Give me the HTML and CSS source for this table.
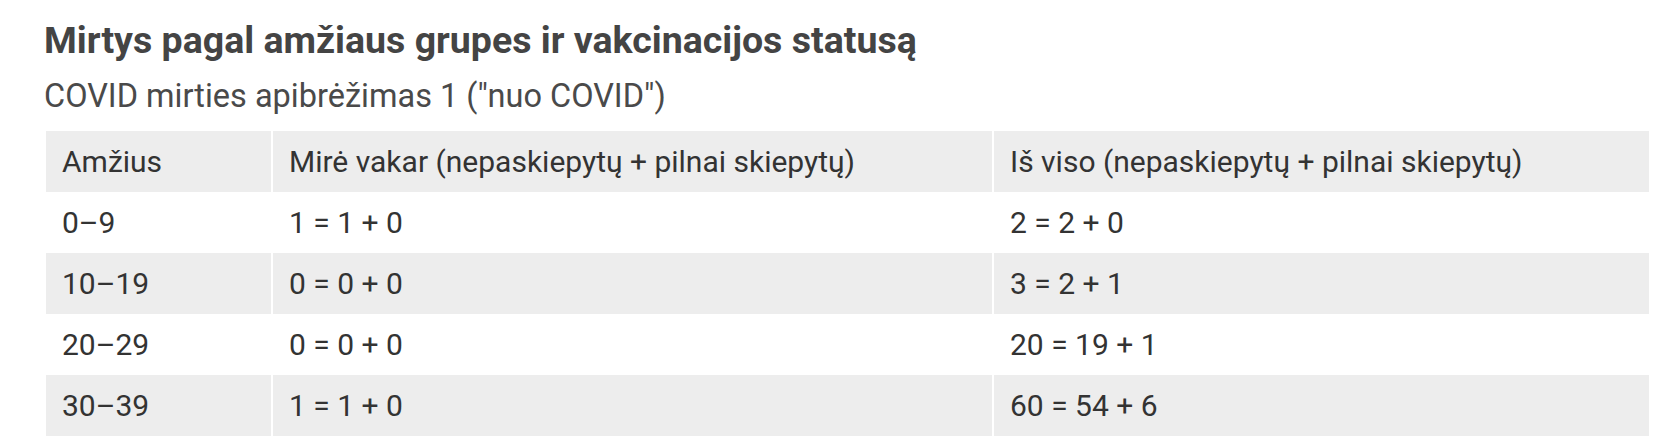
FILE: index.html
```html
<!DOCTYPE html>
<html lang="lt">
<head>
<meta charset="utf-8">
<link rel="stylesheet" href="styles.css">
</head>
<body>
<div class="page">
  <h2 class="title">Mirtys pagal amžiaus grupes ir vakcinacijos statusą</h2>
  <h3 class="subtitle">COVID mirties apibrėžimas 1 ("nuo COVID")</h3>
  <table class="stats">
    <thead>
      <tr><th class="c1">Amžius</th><th class="c2">Mirė vakar (nepaskiepytų + pilnai skiepytų)</th><th class="c3">Iš viso (nepaskiepytų + pilnai skiepytų)</th></tr>
    </thead>
    <tbody>
      <tr><td>0–9</td><td>1 = 1 + 0</td><td>2 = 2 + 0</td></tr>
      <tr><td>10–19</td><td>0 = 0 + 0</td><td>3 = 2 + 1</td></tr>
      <tr><td>20–29</td><td>0 = 0 + 0</td><td>20 = 19 + 1</td></tr>
      <tr><td>30–39</td><td>1 = 1 + 0</td><td>60 = 54 + 6</td></tr>
    </tbody>
  </table>
</div>
</body>
</html>
```
FILE: styles.css
```css
html, body {
  margin: 0;
  padding: 0;
  background: #fff;
}
.page {
  padding: 18px 18px 0 44px;
  font-family: Roboto, "Liberation Sans", sans-serif;
  color: #333;
}
.title {
  margin: 0;
  font-size: 37.5px;
  line-height: 44px;
  font-weight: 700;
  color: #444;
}
.subtitle {
  margin: 14px 0 15px;
  font-size: 32.5px;
  line-height: 40px;
  font-weight: 400;
  color: #4a4a4a;
}
.stats {
  border-collapse: separate;
  border-spacing: 2px 0;
  width: 1607px;
  font-size: 30px;
}
.stats th, .stats td {
  text-align: left;
  font-weight: 400;
  padding: 0 16px;
  height: 61px;
  line-height: 40px;
  color: #333;
}
.stats th { background: #ededed; }
.stats tbody tr:nth-child(even) td { background: #ededed; }
.c1 { width: 225px; }
.c2 { width: 719px; }
.c3 { width: 655px; }
.stats th.c1, .stats th.c2, .stats th.c3 { box-sizing: border-box; }
```
